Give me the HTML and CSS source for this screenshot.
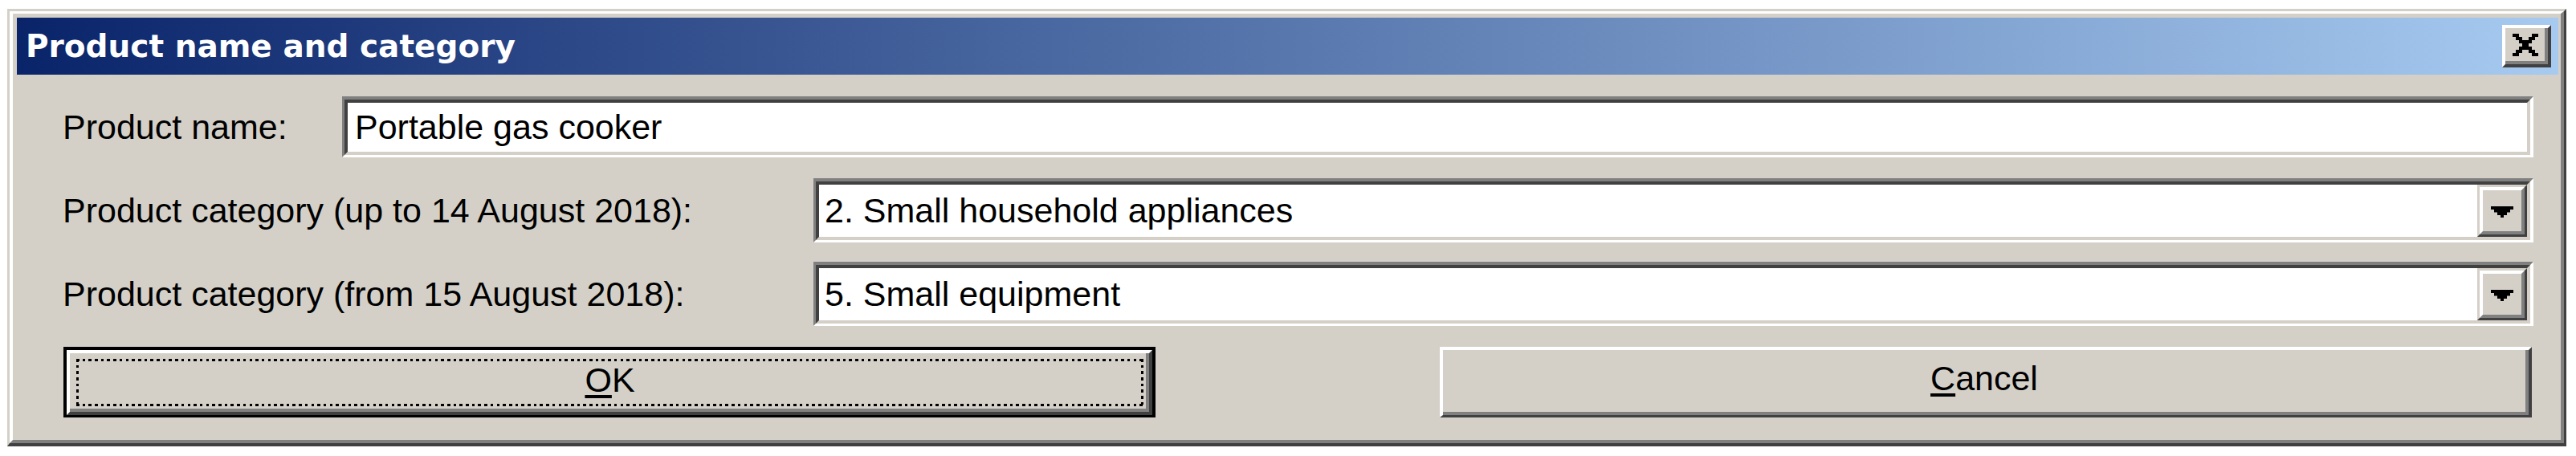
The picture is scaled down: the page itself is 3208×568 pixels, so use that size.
FILE: index.html
```html
<!DOCTYPE html>
<html>
<head>
<meta charset="utf-8">
<title>Product name and category</title>
<link rel="stylesheet" href="styles.css">
</head>
<body>
<div class="win">
  <div class="win-in">
    <div class="titlebar">
      <span class="title">Product name and category</span>
      <div class="closebtn">
        <div class="closebtn-in">
          <svg class="xglyph" width="32" height="28" viewBox="0 0 32 28"><path fill="#000" d="M0 0h8v4h-8z M24 0h8v4h-8z M4 4h8v4h-8z M20 4h8v4h-8z M8 8h16v4h-16z M12 12h8v4h-8z M8 16h16v4h-16z M4 20h8v4h-8z M20 20h8v4h-8z M0 24h8v4h-8z M24 24h8v4h-8z"/></svg>
        </div>
      </div>
    </div>
    <div class="content">
      <div class="row row-name">
        <span class="lbl lbl-name">Product name:</span>
        <div class="sunken">
          <div class="sunken-in field-in"><span class="val">Portable gas cooker</span></div>
        </div>
      </div>
      <div class="row row-combo row-combo1">
        <span class="lbl lbl-combo">Product category (up to 14 August 2018):</span>
        <div class="sunken">
          <div class="sunken-in combo-in">
            <span class="val">2. Small household appliances</span>
            <div class="dropbtn"><div class="dropbtn-in"><svg width="28" height="14" viewBox="0 0 28 14"><path fill="#000" d="M0 0H28V4H24V7.5H20V11H16V14H12V11H8V7.5H4V4H0Z"/></svg></div></div>
          </div>
        </div>
      </div>
      <div class="row row-combo row-combo2">
        <span class="lbl lbl-combo">Product category (from 15 August 2018):</span>
        <div class="sunken">
          <div class="sunken-in combo-in">
            <span class="val">5. Small equipment</span>
            <div class="dropbtn"><div class="dropbtn-in"><svg width="28" height="14" viewBox="0 0 28 14"><path fill="#000" d="M0 0H28V4H24V7.5H20V11H16V14H12V11H8V7.5H4V4H0Z"/></svg></div></div>
          </div>
        </div>
      </div>
      <div class="buttons">
        <div class="btn btn-default">
          <div class="bevel">
            <div class="bevel-in">
              <div class="focus"><span class="btn-label"><u>O</u>K</span></div>
            </div>
          </div>
        </div>
        <div class="btn btn-normal">
          <div class="bevel">
            <div class="bevel-in">
              <span class="btn-label"><u>C</u>ancel</span>
            </div>
          </div>
        </div>
      </div>
    </div>
  </div>
</div>
</body>
</html>
```
FILE: styles.css
```css
* { box-sizing: border-box; margin: 0; padding: 0; }
html, body { background: #ffffff; }
body {
  padding: 11px 0 0 9px;
  font-family: "Liberation Sans", Arial, sans-serif;
  font-size: 43px;
  color: #000;
}
.win {
  width: 3187px;
  height: 545px;
  border-style: solid;
  border-width: 3px 3px 4px 3px;
  border-color: #d4d0c8 #404040 #404040 #d4d0c8;
}
.win-in {
  height: 100%;
  border-style: solid;
  border-width: 3px 4px 4px 4px;
  border-color: #ffffff #808080 #808080 #ffffff;
  background: #d4d0c8;
  padding: 5px 3px 0 5px;
  display: flex;
  flex-direction: column;
}
.titlebar {
  height: 71px;
  flex: none;
  background: linear-gradient(90deg, #0a246a 0%, #a6caf0 100%);
  display: flex;
  align-items: center;
  justify-content: space-between;
  padding: 0 9px 0 11px;
}
.title {
  color: #ffffff;
  font-family: "DejaVu Sans", Verdana, sans-serif;
  font-weight: bold;
  font-size: 39px;
  white-space: nowrap;
}
.closebtn {
  width: 61px;
  height: 53px;
  border-style: solid;
  border-width: 4px;
  border-color: #ffffff #404040 #404040 #ffffff;
}
.closebtn-in {
  height: 100%;
  border-style: solid;
  border-width: 0 4px 4px 0;
  border-color: #d4d0c8 #808080 #808080 #d4d0c8;
  background: #d4d0c8;
  display: flex;
  align-items: center;
  justify-content: center;
}
.xglyph { display: block; }
.content {
  flex: 1;
  padding: 27px 31px 0 57px;
  display: flex;
  flex-direction: column;
}
.row {
  display: flex;
  align-items: center;
}
.row-name { height: 76px; }
.row-combo { height: 80px; }
.row-combo1 { margin-top: 26px; }
.row-combo2 { margin-top: 24px; }
.lbl { white-space: nowrap; flex: none; }
.lbl-name { width: 348px; }
.lbl-combo { width: 935px; }
.sunken {
  flex: 1;
  height: 100%;
  border-style: solid;
  border-width: 4px 4px 3px 3px;
  border-color: #808080 #ffffff #ffffff #808080;
}
.sunken-in {
  height: 100%;
  border-style: solid;
  border-width: 4px;
  border-color: #404040 #d4d0c8 #d4d0c8 #404040;
  background: #ffffff;
  display: flex;
  align-items: center;
}
.field-in { padding-left: 9px; }
.combo-in { padding-left: 7px; }
.val { flex: 1; white-space: nowrap; }
.dropbtn {
  width: 62px;
  height: 100%;
  flex: none;
  border-style: solid;
  border-width: 3px;
  border-color: #d4d0c8 #404040 #404040 #d4d0c8;
}
.dropbtn-in {
  height: 100%;
  border-style: solid;
  border-width: 4px;
  border-color: #ffffff #808080 #808080 #ffffff;
  background: #d4d0c8;
  display: flex;
  align-items: center;
  justify-content: center;
  padding-top: 2px;
}
.dropbtn-in svg { display: block; }
.buttons {
  margin-top: 26px;
  height: 88px;
  display: flex;
  justify-content: space-between;
  padding: 0 2px 0 1px;
}
.btn {
  width: 1360px;
  height: 88px;
}
.btn-default {
  border-style: solid;
  border-width: 4px 4px 3px 4px;
  border-color: #000;
}
.bevel {
  height: 100%;
  border-style: solid;
  border-width: 4px;
  border-color: #ffffff #404040 #404040 #ffffff;
}
.btn-normal .bevel { border-bottom-width: 3px; }
.bevel-in {
  height: 100%;
  border-style: solid;
  border-width: 0 4px 4px 0;
  border-color: #d4d0c8 #808080 #808080 #d4d0c8;
  background: #d4d0c8;
  display: flex;
  align-items: center;
  justify-content: center;
}
.btn-default .bevel-in {
  padding: 7px 3px 3px 8px;
  align-items: stretch;
}
.focus {
  flex: 1;
  display: flex;
  align-items: center;
  justify-content: center;
  background:
    repeating-linear-gradient(90deg, #000 0 3.5px, transparent 3.5px 7.7px) left top / 100% 3px no-repeat,
    repeating-linear-gradient(90deg, #000 0 3.5px, transparent 3.5px 7.7px) left bottom / 100% 3px no-repeat,
    repeating-linear-gradient(180deg, #000 0 3.5px, transparent 3.5px 7.7px) left top / 3px 100% no-repeat,
    repeating-linear-gradient(180deg, #000 0 3.5px, transparent 3.5px 7.7px) right top / 3px 100% no-repeat;
}
.btn-label {
  white-space: nowrap;
  padding-bottom: 6px;
}
.btn-label u {
  text-decoration-thickness: 4px;
  text-underline-offset: 4px;
}
```
